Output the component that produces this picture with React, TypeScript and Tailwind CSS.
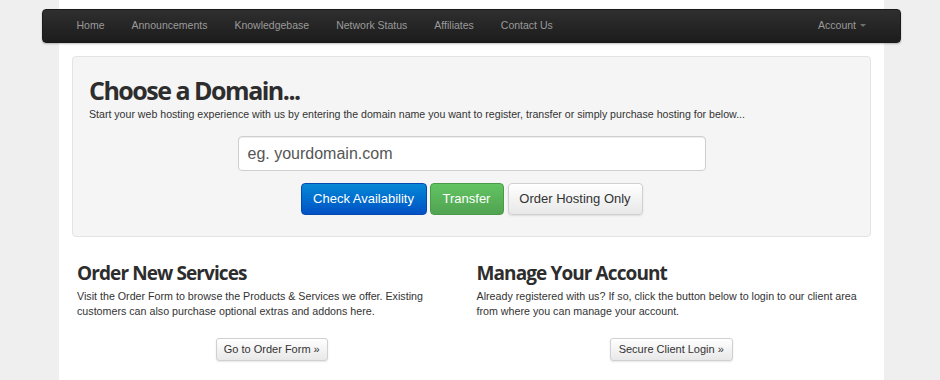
import React from "react";

const navItems = ["Home", "Announcements", "Knowledgebase", "Network Status", "Affiliates", "Contact Us"];

export default function App() {
  return (
    <div className="min-h-[380px] w-[940px] bg-[#efefef] overflow-hidden" style={{ fontFamily: '"Liberation Sans", Arial, sans-serif' }}>
      <div className="ml-[59px] w-[825px] min-h-[380px] bg-white pt-[9px]">
        {/* Navbar */}
        <div className="-mx-[17px] h-[34px] rounded-[4px] bg-gradient-to-b from-[#2f2f2f] to-[#1c1c1c] border border-[#1a1a1a] shadow-[0_1px_2px_rgba(0,0,0,0.25)] flex items-center justify-between pl-[20px] pr-[21px] pb-[1px]">
          <div className="flex items-center">
            {navItems.map((n) => (
              <span key={n} className="px-[13.5px] text-[10.5px] text-[#9a9a9a] leading-none">
                {n}
              </span>
            ))}
          </div>
          <div className="flex items-center px-[13px] text-[10.5px] text-[#9a9a9a] leading-none">
            Account
            <span className="ml-[4px] inline-block w-0 h-0 border-l-[3px] border-r-[3px] border-t-[3px] border-l-transparent border-r-transparent border-t-[#6f6f6f]" />
          </div>
        </div>

        {/* Hero */}
        <div className="mt-[13px] ml-[13px] w-[799px] h-[181px] rounded-[4px] border border-[#e3e3e3] bg-[#f5f5f5] pl-[16px] pt-[17px]">
          <h1 className="text-[25px] font-bold text-[#2d2d2d] leading-[32px] tracking-[-1.5px]" style={{ fontFamily: '"Open Sans", sans-serif' }}>
            Choose a Domain...
          </h1>
          <p className="mt-[1px] text-[10.6px] text-[#333] leading-[14px]">
            Start your web hosting experience with us by entering the domain name you want to register, transfer or simply purchase hosting for below...
          </p>
          <div className="mt-[15px] flex flex-col items-center pr-[16px]">
            <div className="w-[468px] h-[35px] rounded-[4px] border border-[#cfcfcf] bg-white shadow-[inset_0_1px_1px_rgba(0,0,0,0.075)] flex items-center pl-[9px] text-[16px] text-[#555]">
              eg. yourdomain.com
            </div>
            <div className="mt-[12px] flex gap-[3px]">
              <button className="h-[32px] w-[126px] rounded-[4px] bg-gradient-to-b from-[#0a88d6] to-[#0451c4] border border-[#0548b0] text-white text-[13px]">
                Check Availability
              </button>
              <button className="h-[32px] w-[74px] rounded-[4px] bg-gradient-to-b from-[#62c462] to-[#51a351] border border-[#4a9a4a] text-white text-[13px]">
                Transfer
              </button>
              <button className="ml-[1px] h-[32px] w-[135px] rounded-[4px] bg-gradient-to-b from-white to-[#e8e8e8] border border-[#d0d0d0] shadow-[0_1px_2px_rgba(0,0,0,0.1)] text-[#333] text-[13px]">
                Order Hosting Only
              </button>
            </div>
          </div>
        </div>

        {/* Columns */}
        <div className="ml-[13px] w-[799px] grid grid-cols-2 mt-[24px]">
          {[
            {
              t: "Order New Services",
              p: "Visit the Order Form to browse the Products & Services we offer. Existing customers can also purchase optional extras and addons here.",
              b: "Go to Order Form »",
              w: "w-[112px]",
            },
            {
              t: "Manage Your Account",
              p: "Already registered with us? If so, click the button below to login to our client area from where you can manage your account.",
              b: "Secure Client Login »",
              w: "w-[123px]",
            },
          ].map((c) => (
            <div key={c.t} className="px-[5px]">
              <h2 className="text-[19px] font-bold text-[#2d2d2d] leading-[24px] tracking-[-0.9px]" style={{ fontFamily: '"Open Sans", sans-serif' }}>
                {c.t}
              </h2>
              <p className="mt-[4px] text-[10.7px] leading-[15px] text-[#333]">{c.p}</p>
              <div className="mt-[19px] flex justify-center">
                <button className={`${c.w} h-[23px] rounded-[3px] bg-gradient-to-b from-white to-[#e8e8e8] border border-[#d0d0d0] shadow-[0_1px_2px_rgba(0,0,0,0.1)] text-[11px] text-[#333]`}>
                  {c.b}
                </button>
              </div>
            </div>
          ))}
        </div>
      </div>
    </div>
  );
}
